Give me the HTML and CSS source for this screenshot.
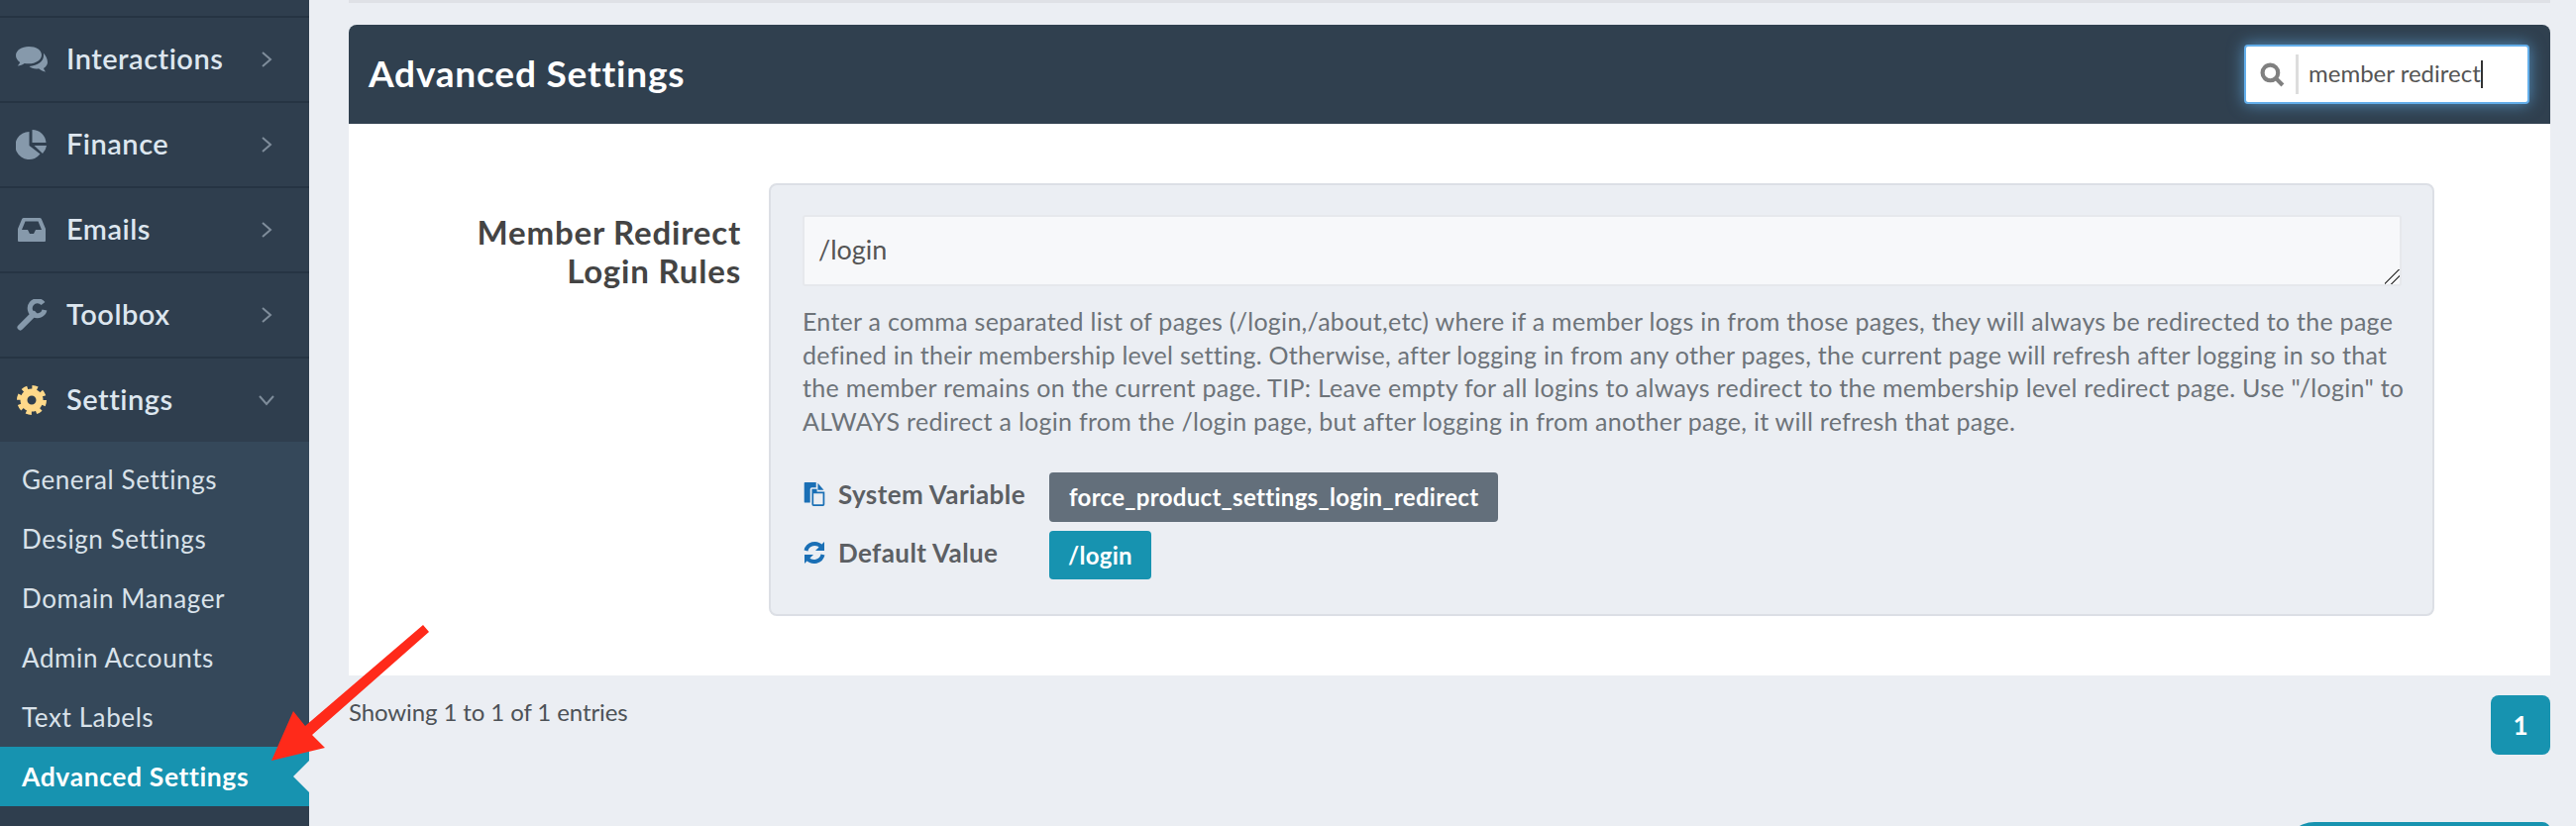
FILE: index.html
```html
<!DOCTYPE html>
<html lang="en">
<head>
  <meta charset="UTF-8" />
  <title>Advanced Settings</title>
  <link rel="stylesheet" href="styles.css">
</head>
<body>
  <div class="layout">
    <aside class="sidebar">
      <div class="nav-stub"></div>
      <a class="nav-item">
        <svg class="nav-icon" viewBox="0 0 32 26"><path d="M13 0C6 0 0 3.800 0 9c0 2.800 1.600 5.200 4.200 7-.5 1.200-1.300 2.300-2.500 3.400 2.700-.2 5-1.200 7-2.500 1.300.3 2.700.4 4.300.4 7.200 0 13-3.700 13-8.800S20.200 0 13 0z"/><path d="M27.800 6.500c.2 1 .2 2 .2 2.500 0 6-6 10.300-14.500 10.900 1.600 1.500 4 2.500 7 2.500 1 0 1.800-.1 2.600-.2 1.600 1.300 4 2.700 6.900 3.200-.9-1-1.700-2.200-2-3.500 2.400-1.400 4-3.500 4-5.900 0-3.700-1.600-6.500-4.200-9.500z"/></svg>
        <span class="nav-text">Interactions</span>
        <svg class="chevron" viewBox="0 0 12 18"><path d="M2 2l8 7-8 7"/></svg>
      </a>
      <a class="nav-item">
        <svg class="nav-icon" viewBox="0 0 32 32"><path d="M13.500 3A14 14 0 1 0 24.500 25.600L13.500 17z"/><path d="M16.500 1a14 14 0 0 1 14 13h-14z"/><path d="M18.500 17h12.500a14 14 0 0 1-4 8z"/></svg>
        <span class="nav-text">Finance</span>
        <svg class="chevron" viewBox="0 0 12 18"><path d="M2 2l8 7-8 7"/></svg>
      </a>
      <a class="nav-item">
        <svg class="nav-icon" viewBox="0 0 32 26"><path fill-rule="evenodd" d="M8 1h16a2 2 0 0 1 1.800 1.100L30 12v12a1 1 0 0 1-1 1H3a1 1 0 0 1-1-1V12l4.200-9.900A2 2 0 0 1 8 1zm1.500 3.500L6 13h6l2 4h4l2-4h6l-3.500-8.500z"/></svg>
        <span class="nav-text">Emails</span>
        <svg class="chevron" viewBox="0 0 12 18"><path d="M2 2l8 7-8 7"/></svg>
      </a>
      <a class="nav-item">
        <svg class="nav-icon" viewBox="0 0 32 32"><path class="wrench" d="M4.500 28.500L18 15"/><path class="wrench-head" d="M27.500 4.500A7.500 7.500 0 1 0 29 11"/></svg>
        <span class="nav-text">Toolbox</span>
        <svg class="chevron" viewBox="0 0 12 18"><path d="M2 2l8 7-8 7"/></svg>
      </a>
      <a class="nav-item nav-item-open">
        <svg class="nav-icon gear" viewBox="0 0 32 32"><circle class="gear-ring" cx="16" cy="16" r="8"/><circle class="gear-teeth" cx="16" cy="16" r="12.500"/></svg>
        <span class="nav-text">Settings</span>
        <svg class="chevron chevron-down" viewBox="0 0 18 12"><path d="M2 2l7 8 7-8"/></svg>
      </a>
      <div class="subnav">
        <a class="subnav-item">General Settings</a>
        <a class="subnav-item">Design Settings</a>
        <a class="subnav-item">Domain Manager</a>
        <a class="subnav-item">Admin Accounts</a>
        <a class="subnav-item">Text Labels</a>
        <a class="subnav-item active">Advanced Settings</a>
      </div>
    </aside>

    <main class="content">
      <div class="top-line"></div>
      <section class="panel">
        <header class="panel-head">
          <h1>Advanced Settings</h1>
          <div class="search">
            <svg class="search-icon" viewBox="0 0 24 24"><circle cx="10" cy="10" r="7.500"/><path d="M15.500 15.500L22 22"/></svg>
            <span class="search-value">member redirect</span><span class="caret"></span>
          </div>
        </header>
        <div class="panel-body">
          <div class="setting">
            <label class="setting-label">Member Redirect<br>Login Rules</label>
            <div class="setting-box">
              <textarea class="setting-input">/login</textarea>
              <p class="help">Enter a comma separated list of pages (/login,/about,etc) where if a member logs in from those pages, they will always be redirected to the page<br>defined in their membership level setting. Otherwise, after logging in from any other pages, the current page will refresh after logging in so that<br>the member remains on the current page. TIP: Leave empty for all logins to always redirect to the membership level redirect page. Use "/login" to<br>ALWAYS redirect a login from the /login page, but after logging in from another page, it will refresh that page.</p>
              <div class="meta">
                <div class="meta-name">
                  <svg class="meta-icon" viewBox="0 0 24 28"><path d="M1 0h13v6H9a2 2 0 0 0-2 2v16H1a1 1 0 0 1-1-1V1a1 1 0 0 1 1-1z"/><path d="M16 1l7 8h-7z"/><path fill-rule="evenodd" d="M9 8h6v3h9v15a2 2 0 0 1-2 2H11a2 2 0 0 1-2-2zm2 5v13h11V13z"/></svg>
                  System Variable
                </div>
                <span class="tag tag-grey">force_product_settings_login_redirect</span>
                <div class="meta-name">
                  <svg class="meta-icon" viewBox="0 0 24 24"><path class="sync" d="M3.500 10A9 9 0 0 1 19 6"/><path d="M22 1v9h-9z"/><path class="sync" d="M20.500 14A9 9 0 0 1 5 18"/><path d="M2 23v-9h9z"/></svg>
                  Default Value
                </div>
                <span class="tag tag-teal">/login</span>
              </div>
            </div>
          </div>
        </div>
      </section>
      <div class="list-foot">
        <span class="entries">Showing 1 to 1 of 1 entries</span>
        <a class="page-btn">1</a>
      </div>
      <div class="save-row"><a class="save-btn"></a></div>
    </main>
  </div>

  <!-- annotation arrow on top of the screenshot -->
  <svg class="arrow" viewBox="0 0 2600 834"><polygon points="433,638 427,631 308,733 296,718 274,768 328,755 315,742"/></svg>
</body>
</html>
```

FILE: styles.css
```css
* { box-sizing: border-box; }
html, body { height: 100%; }
body {
  margin: 0;
  overflow: hidden;
  font-family: "Lato", "Open Sans", sans-serif;
  background-color: #ebeef3;
  color: #444;
}
.layout { display: flex; height: 834px; overflow: hidden; }

/* sidebar */
.sidebar {
  flex: 0 0 312px;
  background-color: #2f3e4e;
  overflow: hidden;
}
.nav-stub {
  height: 18px;
  border-bottom: 2px solid #263443;
}
.nav-item {
  display: flex;
  align-items: center;
  height: 86px;
  padding: 0 37px 0 16px;
  border-bottom: 2px solid #263443;
}
.nav-item-open { height: 84px; border-bottom: none; }
.nav-icon {
  flex: 0 0 32px;
  width: 32px;
  height: 32px;
  fill: #8699ab;
}
.wrench { fill: none; stroke: #8699ab; stroke-width: 6; stroke-linecap: round; }
.wrench-head { fill: none; stroke: #8699ab; stroke-width: 5; }
.gear-ring { fill: none; stroke: #ffd98a; stroke-width: 7; }
.gear-teeth { fill: none; stroke: #ffd98a; stroke-width: 5; stroke-dasharray: 5.300 4.520; }
.nav-text {
  flex: 1;
  margin-left: 19px;
  padding-bottom: 3px;
  font-size: 29px;
  font-weight: 600;
  letter-spacing: 0.5px;
  color: #dde6ef;
}
.chevron { width: 12px; height: 18px; }
.chevron path { fill: none; stroke: #7f8d9b; stroke-width: 2; }
.chevron-down { width: 18px; height: 12px; margin-right: -3px; }
.subnav {
  background-color: #35485a;
  padding-top: 8px;
}
.subnav-item {
  display: flex;
  align-items: center;
  height: 60px;
  padding-left: 22px;
  font-size: 26px;
  letter-spacing: 0.6px;
  color: #d9e2ea;
}
.subnav-item.active {
  position: relative;
  background-color: #1793b0;
  color: #fff;
  font-size: 26.500px;
  font-weight: 700;
}
.subnav-item.active::after {
  content: "";
  position: absolute;
  right: 0;
  top: 14px;
  border-top: 16px solid transparent;
  border-bottom: 16px solid transparent;
  border-right: 16px solid #ebeef3;
}

/* main column */
.content {
  flex: 1;
  min-width: 0;
  padding: 0 26px 0 40px;
}
.top-line {
  height: 3px;
  margin-bottom: 22px;
  background-color: #dfe1e6;
}
.panel-head {
  display: flex;
  align-items: center;
  justify-content: space-between;
  height: 100px;
  padding: 0 21px 0 20px;
  background-color: #30404f;
  border-radius: 8px 8px 0 0;
}
.panel-head h1 {
  margin: 0 0 3px;
  font-size: 37px;
  font-weight: 700;
  letter-spacing: 0.8px;
  color: #fff;
}
.search {
  display: flex;
  align-items: center;
  width: 288px;
  height: 60px;
  padding-left: 14px;
  background-color: #fff;
  border: 2px solid #63aeea;
  border-radius: 4px;
  box-shadow: 0 0 16px rgba(99, 174, 234, 0.7);
}
.search-icon {
  flex: 0 0 25px;
  width: 25px;
  height: 25px;
  margin-right: 11px;
}
.search-icon circle, .search-icon path { fill: none; stroke: #808080; stroke-width: 4; }
.search-value {
  height: 40px;
  padding-left: 10px;
  border-left: 3px solid #ddd;
  font-size: 24px;
  line-height: 38px;
  color: #555;
}
.caret {
  width: 2px;
  height: 28px;
  background-color: #333;
}
.panel-body {
  height: 557px;
  padding: 60px 117px 0 0;
  background-color: #fff;
}
.setting { display: flex; }
.setting-label {
  flex: 0 0 396px;
  padding-top: 30px;
  text-align: right;
  font-size: 33px;
  font-weight: 700;
  line-height: 39px;
  letter-spacing: 0.8px;
  color: #444;
}
.setting-box {
  flex: 1;
  min-width: 0;
  margin-left: 28px;
  height: 437px;
  padding: 30px 31px 0 32px;
  background-color: #ebeef3;
  border: 2px solid #dcdfe5;
  border-radius: 8px;
}
.setting-input {
  display: block;
  width: 100%;
  height: 72px;
  padding: 16px 14px;
  background-color: #f7f8fa;
  border: 2px solid #e6e8ec;
  border-radius: 3px;
  outline: none;
  font-family: inherit;
  font-size: 27px;
  color: #555;
}
.setting-input::-webkit-resizer {
  background: linear-gradient(135deg, transparent 45%, #555 45%, #555 52%, transparent 52%, transparent 68%, #555 68%, #555 75%, transparent 75%);
}
.help {
  margin: 19px 0 35px;
  font-size: 25px;
  line-height: 33.6px;
  letter-spacing: 0.28px;
  white-space: nowrap;
  color: #6d7379;
}
.meta {
  display: grid;
  grid-template-columns: 249px auto;
  justify-content: start;
  gap: 9px 0;
  align-items: start;
}
.meta-name {
  display: flex;
  align-items: center;
  height: 44px;
  font-size: 26px;
  font-weight: 700;
  letter-spacing: 0.4px;
  color: #5c5f63;
}
.meta-icon {
  width: 24px;
  height: 24px;
  margin-right: 12px;
  fill: #1a6fb5;
}
.sync { fill: none; stroke: #1a6fb5; stroke-width: 4; }
.tag {
  justify-self: start;
  display: block;
  padding: 0 20px;
  height: 50px;
  line-height: 50px;
  border-radius: 4px;
  font-size: 24px;
  font-weight: 700;
  letter-spacing: 0.3px;
  color: #fff;
}
.tag-grey { background-color: #636f7b; }
.tag-teal { background-color: #1793b0; height: 49px; line-height: 49px; padding: 0 19px; }
.list-foot {
  display: flex;
  justify-content: space-between;
  align-items: flex-start;
  margin-top: 20px;
}
.entries {
  margin-top: 2px;
  font-size: 24px;
  letter-spacing: -0.1px;
  color: #4d5257;
}
.page-btn {
  display: block;
  width: 60px;
  height: 60px;
  line-height: 60px;
  text-align: center;
  background-color: #1793b0;
  border-radius: 8px;
  font-size: 26px;
  font-weight: 700;
  color: #fff;
}
.save-row {
  display: flex;
  justify-content: flex-end;
  margin-top: 68px;
}
.save-btn {
  display: block;
  width: 268px;
  height: 60px;
  background-color: #1793b0;
  border-radius: 30px 8px 8px 8px;
}

/* red arrow drawn over the page */
.arrow {
  position: fixed;
  left: 0;
  top: 0;
  width: 2600px;
  height: 834px;
  pointer-events: none;
  fill: #ff2a1a;
}
```
